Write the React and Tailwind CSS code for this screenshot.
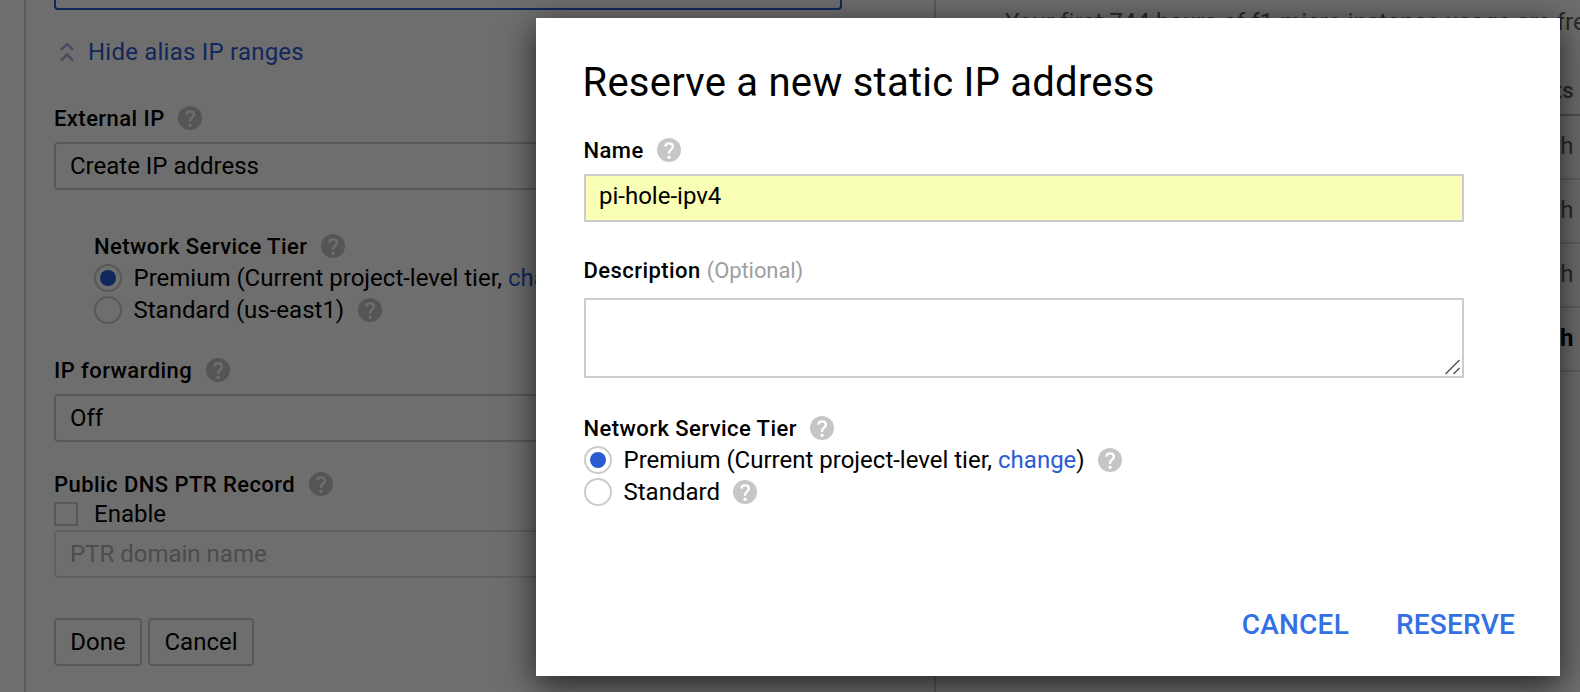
function HelpIcon() {
  return (
    <svg viewBox="0 0 24 24" className="size-6 shrink-0">
      <circle cx="12" cy="12" r="12" className="fill-[#c6c6c6]" />
      <path
        d="M8.400 8.600C8.500 6.500 10 5.300 12.100 5.300c2.200 0 3.800 1.300 3.800 3.200 0 2.900-3.800 3.300-3.800 6.300v.9"
        className="fill-none stroke-white stroke-[2.3]"
      />
      <circle cx="12.100" cy="19.300" r="1.700" className="fill-white" />
    </svg>
  );
}

function Label({ children, className = "" }) {
  return (
    <div className={`flex h-6 items-center gap-[13.500px] text-[22px] leading-6 font-medium tracking-[0.44px] ${className}`}>
      <span className="translate-y-px">{children}</span>
      <HelpIcon />
    </div>
  );
}

function Radio({ checked, children }) {
  return (
    <div className="flex h-7 items-center whitespace-nowrap">
      <span className="flex size-7 shrink-0 items-center justify-center rounded-full border-2 border-[#ccc]">
        {checked && <span className="size-4 rounded-full bg-[#2a5bd3]" />}
      </span>
      <span className="ml-[11.5px] mr-[13.500px]">{children}</span>
      <HelpIcon />
    </div>
  );
}

function Select({ children, className = "" }) {
  return (
    <div className={`flex h-12 w-[788px] items-center rounded-[4px] border-2 px-[14px] ${className}`}>
      {children}
    </div>
  );
}

function InstanceForm() {
  return (
    <section className="flex h-[692px] w-[912px] shrink-0 flex-col border-x-2 border-[#d0d0d0] pl-7">
      <div className="h-[10px] w-[788px] shrink-0 rounded-b-[4px] border-2 border-t-0 border-[#2a5bd3]" />
      <div className="mt-7 flex h-7 items-center pl-[6px] text-[#2a5bd3]">
        <svg viewBox="0 0 14 20" className="h-5 w-[14px] fill-none stroke-[#a0afdf] stroke-[2.4]">
          <path d="M1 8l6-6 6 6M1 18.500l6-6 6 6" />
        </svg>
        <span className="ml-[14px] tracking-[0.22px]">Hide alias IP ranges</span>
      </div>
      <Label className="mt-10">External IP</Label>
      <Select className="mt-3 border-[#ccc]">Create IP address</Select>
      <div className="mt-11 flex flex-col pl-10">
        <Label>Network Service Tier</Label>
        <div className="mt-1.5 flex flex-col gap-1">
          <Radio checked>
            Premium (Current project-level tier, <span className="text-[#2a5bd3]">change</span>)
          </Radio>
          <Radio>Standard (us-east1)</Radio>
        </div>
      </div>
      <Label className="mt-[34px]">IP forwarding</Label>
      <Select className="mt-3 border-[#ccc]">Off</Select>
      <Label className="mt-[30px]">Public DNS PTR Record</Label>
      <div className="mt-1.5 flex h-6 items-center gap-4">
        <span className="size-6 border-2 border-[#ccc]" />
        <span>Enable</span>
      </div>
      <Select className="mt-1 border-[#e2e2e2] text-[#b0b0b0]">PTR domain name</Select>
      <div className="mt-10 flex gap-1.5">
        <button className="h-12 w-[88px] rounded-[4px] border-2 border-[#ccc]">Done</button>
        <button className="h-12 w-[106px] rounded-[4px] border-2 border-[#ccc]">Cancel</button>
      </div>
    </section>
  );
}

function CostRow({ children, className = "" }) {
  return (
    <div className={`flex h-16 items-center justify-end border-b-2 border-[#e0e0e0] pr-[6.500px] ${className}`}>
      <span className="-translate-y-px">{children}</span>
    </div>
  );
}

function CostPanel() {
  return (
    <aside className="ml-[69px] flex w-[575px] shrink-0 flex-col text-[#616161]">
      <p className="mt-2 h-7 whitespace-nowrap leading-7 tracking-[0.09px]">Your first 744 hours of f1-micro instance usage are free</p>
      <div className="mt-6 flex h-14 items-center justify-end border-b-2 border-[#bdbdbd] pt-2 pr-[6.500px] text-[22px] font-medium">
        <span>Estimated costs</span>
      </div>
      <CostRow>$0.008/h</CostRow>
      <CostRow>$0.001/h</CostRow>
      <CostRow>$0.002/h</CostRow>
      <CostRow className="font-bold text-black">$0.007/h</CostRow>
    </aside>
  );
}

function ReserveDialog() {
  return (
    <div className="flex h-[658px] w-[1024px] flex-col bg-white pt-10 pr-[45px] pl-[47.500px] shadow-[0_8px_32px_rgba(0,0,0,0.7)]">
      <h1 className="-ml-px h-12 translate-y-px text-[40px] leading-[48px] tracking-[0.24px]">Reserve a new static IP address</h1>
      <Label className="mt-8">Name</Label>
      <div className="mt-3 ml-[0.5px] flex h-12 w-[880px] items-center border-2 border-[#ccc] bg-[#f9ffb4] px-[13px] pb-1">
        pi-hole-ipv4
      </div>
      <div className="mt-9 flex h-6 items-center gap-[6px] pt-[2px] text-[22px] leading-6">
        <span className="font-medium tracking-[0.44px]">Description</span>
        <span className="tracking-[-0.08px] text-[#9e9e9e]">(Optional)</span>
      </div>
      <div className="mt-4 ml-[0.5px] flex h-20 w-[880px] items-end justify-end border-2 border-[#ccc] p-px">
        <svg viewBox="0 0 16 16" className="size-4 fill-none stroke-[#555] stroke-[1.5]">
          <path d="M.500 15L14.500 1M8.500 15l6-6" />
        </svg>
      </div>
      <Label className="mt-[38px]">Network Service Tier</Label>
      <div className="mt-1.5 flex flex-col gap-1 pl-[0.5px]">
        <Radio checked>
          Premium (Current project-level tier, <span className="text-[#2a5bd3]">change</span>)
        </Radio>
        <Radio>Standard</Radio>
      </div>
      <div className="mt-[103px] flex h-8 justify-end gap-[47px] text-[28px] leading-8 font-medium tracking-[0.22px] text-[#3270e5]">
        <button>CANCEL</button>
        <button>RESERVE</button>
      </div>
    </div>
  );
}

export default function App() {
  return (
    <div className="relative flex h-[692px] w-[1580px] overflow-hidden bg-white pl-6 font-['Roboto','Liberation_Sans',sans-serif] text-2xl text-black">
      <InstanceForm />
      <CostPanel />
      <div className="absolute inset-0 flex bg-black/57 pt-[18px] pl-[536px]">
        <ReserveDialog />
      </div>
    </div>
  );
}
